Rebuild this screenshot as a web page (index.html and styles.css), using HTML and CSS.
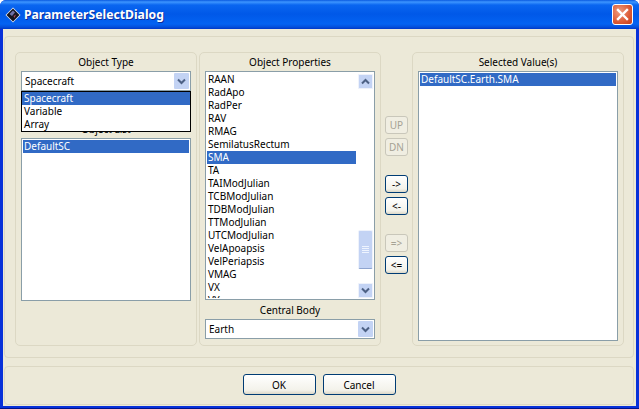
FILE: index.html
```html
<!DOCTYPE html>
<html lang="en">
<head>
    <meta charset="UTF-8">
    <title>ParameterSelectDialog</title>
    <link rel="stylesheet" href="styles.css">
</head>
<body>
    <div class="window">

        <!-- Title bar -->
        <div class="titlebar">
            <svg class="app-icon" width="16" height="16" viewBox="0 0 16 16">
                <path d="M8 .5 L15.5 8 L8 15.5 L.5 8 Z" fill="#e8ecf8"/>
                <path d="M8 1.5 L14.5 8 L8 14.5 L1.5 8 Z" fill="#15151f"/>
                <path d="M4.5 7 L8 3.5 L10 5.5 L7 9 Z" fill="#6f71a8"/>
                <path d="M8.5 9 L11 7.5 L9.5 11 Z" fill="#a8465a"/>
            </svg>
            <span class="title">ParameterSelectDialog</span>
            <div class="close-btn">
                <svg width="13" height="13" viewBox="0 0 13 13">
                    <path d="M2 2 L11 11 M11 2 L2 11" stroke="#fff" stroke-width="2.4" stroke-linecap="square"/>
                </svg>
            </div>
        </div>

        <div class="client">
            <div class="main-panel">

                <!-- Object type and list -->
                <div class="group">
                    <div class="label">Object Type</div>
                    <div class="combo">
                        <span class="combo-text">Spacecraft</span>
                        <div class="arrow-btn">
                            <svg width="9" height="7" viewBox="0 0 9 7"><path d="M1 1.5 L4.5 5 L8 1.5" class="chevron"/></svg>
                        </div>
                    </div>
                    <div class="label label-list">Object List</div>
                    <div class="listbox list-objects">
                        <div class="rows">
                            <div class="row selected">DefaultSC</div>
                        </div>
                    </div>
                    <div class="popup">
                        <div class="popup-row selected">Spacecraft</div>
                        <div class="popup-row">Variable</div>
                        <div class="popup-row">Array</div>
                    </div>
                </div>

                <!-- Object properties -->
                <div class="group">
                    <div class="label">Object Properties</div>
                    <div class="listbox list-props">
                        <div class="rows">
                            <div class="row">RAAN</div>
                            <div class="row">RadApo</div>
                            <div class="row">RadPer</div>
                            <div class="row">RAV</div>
                            <div class="row">RMAG</div>
                            <div class="row">SemilatusRectum</div>
                            <div class="row selected">SMA</div>
                            <div class="row">TA</div>
                            <div class="row">TAIModJulian</div>
                            <div class="row">TCBModJulian</div>
                            <div class="row">TDBModJulian</div>
                            <div class="row">TTModJulian</div>
                            <div class="row">UTCModJulian</div>
                            <div class="row">VelApoapsis</div>
                            <div class="row">VelPeriapsis</div>
                            <div class="row">VMAG</div>
                            <div class="row">VX</div>
                            <div class="row">VY</div>
                        </div>
                        <div class="scrollbar">
                            <div class="arrow-btn scroll-btn scroll-up">
                                <svg width="9" height="7" viewBox="0 0 9 7"><path d="M1 5.5 L4.5 2 L8 5.5" class="chevron"/></svg>
                            </div>
                            <div class="thumb">
                                <svg width="7" height="8" viewBox="0 0 7 8"><path d="M0 .5H7M0 2.5H7M0 4.5H7M0 6.5H7" stroke="#eef4fe"/></svg>
                            </div>
                            <div class="arrow-btn scroll-btn">
                                <svg width="9" height="7" viewBox="0 0 9 7"><path d="M1 1.5 L4.5 5 L8 1.5" class="chevron"/></svg>
                            </div>
                        </div>
                    </div>
                    <div class="label label-body">Central Body</div>
                    <div class="combo">
                        <span class="combo-text">Earth</span>
                        <div class="arrow-btn">
                            <svg width="9" height="7" viewBox="0 0 9 7"><path d="M1 1.5 L4.5 5 L8 1.5" class="chevron"/></svg>
                        </div>
                    </div>
                </div>

                <!-- Move buttons -->
                <div class="move-col">
                    <button class="btn small" disabled>UP</button>
                    <button class="btn small" disabled>DN</button>
                    <button class="btn small gap-top">-&gt;</button>
                    <button class="btn small">&lt;-</button>
                    <button class="btn small gap-top" disabled>=&gt;</button>
                    <button class="btn small">&lt;=</button>
                </div>

                <!-- Selected values -->
                <div class="group group-selected">
                    <div class="label">Selected Value(s)</div>
                    <div class="listbox list-selected">
                        <div class="rows">
                            <div class="row selected">DefaultSC.Earth.SMA</div>
                        </div>
                    </div>
                </div>
            </div>

            <!-- Dialog buttons -->
            <div class="button-panel">
                <button class="btn wide">OK</button>
                <button class="btn wide">Cancel</button>
            </div>
        </div>
    </div>
</body>
</html>
```
FILE: styles.css
```css
/* Page */
html, body {
    margin: 0;
    padding: 0;
    overflow: hidden;
}

body {
    width: 639px;
    height: 409px;
    font-family: "Noto Sans", "Liberation Sans", sans-serif;
    font-size: 10px;
    color: #000;
}

/* Window frame */
.window {
    width: 639px;
    height: 409px;
    display: flex;
    flex-direction: column;
    box-sizing: border-box;
    background: #0831d9;
    border-radius: 6px 6px 0 0;
    border-bottom: 1px solid #00138c;
}

.titlebar {
    height: 29px;
    flex: none;
    display: flex;
    align-items: center;
    padding: 0 6px 0 5px;
    border-radius: 6px 6px 0 0;
    background: linear-gradient(to bottom, #0a5ae0 0, #3d95ff 2px, #0a66f0 5px, #0058e8 14px, #0463f2 24px, #0450dc 27px, #0038c8 29px);
}

.app-icon {
    flex: none;
    margin-right: 3px;
}

.title {
    flex: 1;
    color: #fff;
    font-weight: 700;
    font-size: 12.2px;
    text-shadow: 1px 1px 0 #0f2f9a;
}

.close-btn {
    width: 19px;
    height: 19px;
    display: flex;
    align-items: center;
    justify-content: center;
    border: 1px solid #fff;
    border-radius: 3px;
    background: radial-gradient(circle at 35% 35%, #ee9c80, #dc5a35 60%, #c23c1c);
}

.client {
    flex: 1;
    display: flex;
    flex-direction: column;
    margin: 0 3px 2px;
    padding: 7px 2px 1px 1px;
    background: #ece9d8;
}

/* Panels */
.main-panel {
    height: 322px;
    box-sizing: border-box;
    display: flex;
    padding: 15px 9px 0 10px;
    border: 1px solid #dcd8c4;
    border-radius: 4px;
}

.group {
    position: relative;
    width: 182px;
    height: 294px;
    flex: none;
    box-sizing: border-box;
    margin-right: 2px;
    padding: 0 5px;
    border: 1px solid #dcd8c4;
    border-radius: 5px;
}

.group-selected {
    width: 212px;
    margin-right: 0;
}

.label {
    height: 18px;
    line-height: 18px;
    text-align: center;
    white-space: nowrap;
}

.label-list {
    margin-top: 29px;
}

.label-body {
    margin-top: 1px;
}

/* Lists */
.listbox {
    box-sizing: border-box;
    display: flex;
    padding: 1px;
    overflow: hidden;
    background: #fff;
    border: 1px solid #8a9ea8;
}

.list-objects {
    height: 163px;
}

.list-props {
    height: 229px;
}

.list-selected {
    height: 270px;
}

.rows {
    flex: 1;
    min-width: 0;
    overflow: hidden;
}

.row {
    height: 13px;
    line-height: 13px;
    padding-left: 1px;
    white-space: nowrap;
}

.selected {
    background: #316ac5;
    color: #fff;
}

/* Combo boxes */
.combo {
    height: 20px;
    box-sizing: border-box;
    display: flex;
    align-items: center;
    padding: 1px;
    background: #fff;
    border: 1px solid #8a9ea8;
}

.combo-text {
    flex: 1;
    padding-left: 2px;
}

.arrow-btn {
    width: 15px;
    height: 16px;
    display: flex;
    align-items: center;
    justify-content: center;
    background: #c3d3f4;
    border-radius: 1px;
}

.chevron {
    fill: none;
    stroke: #4d6185;
    stroke-width: 2;
}

/* Open drop-down */
.popup {
    position: absolute;
    top: 38px;
    left: 5px;
    width: 170px;
    height: 41px;
    box-sizing: border-box;
    background: #fff;
    border: 1px solid #000;
}

.popup-row {
    height: 13px;
    line-height: 13px;
    padding-left: 2px;
}

/* Scroll bar */
.scrollbar {
    width: 15px;
    height: 225px;
    flex: none;
    margin-left: 2px;
    display: flex;
    flex-direction: column;
}

.scroll-btn {
    height: 15px;
    flex: none;
    border: 1px solid #eef2fb;
    box-sizing: border-box;
}

.scroll-up {
    margin-top: 1px;
}

.thumb {
    height: 39px;
    margin-top: 141px;
    margin-bottom: 14px;
    flex: none;
    box-sizing: border-box;
    display: flex;
    align-items: center;
    justify-content: center;
    background: #c3d3f4;
    border: 1px solid #eef2fb;
    border-bottom-color: #8ea4cf;
    border-radius: 2px;
}

/* Buttons */
.btn {
    box-sizing: border-box;
    padding: 0;
    font-family: inherit;
    font-size: 10px;
    color: #000;
    background: linear-gradient(to bottom, #fff, #f3f2ea 80%, #dcd8c8);
    border: 1px solid #003c74;
    border-radius: 3px;
}

.btn:disabled {
    color: #a5a294;
    background: #f0eee2;
    border-color: #c9c7ba;
}

.move-col {
    width: 23px;
    flex: none;
    display: flex;
    flex-direction: column;
    gap: 4px;
    margin: 0 4px 0 2px;
    padding-top: 64px;
}

.small {
    width: 23px;
    height: 18px;
}

.gap-top {
    margin-top: 15px;
}

.button-panel {
    height: 39px;
    box-sizing: border-box;
    margin-top: 8px;
    display: flex;
    justify-content: center;
    align-items: flex-start;
    gap: 7px;
    padding: 7px 0 0 0;
    border: 1px solid #dcd8c4;
    border-radius: 4px;
}

.wide {
    width: 73px;
    height: 21px;
}
```
